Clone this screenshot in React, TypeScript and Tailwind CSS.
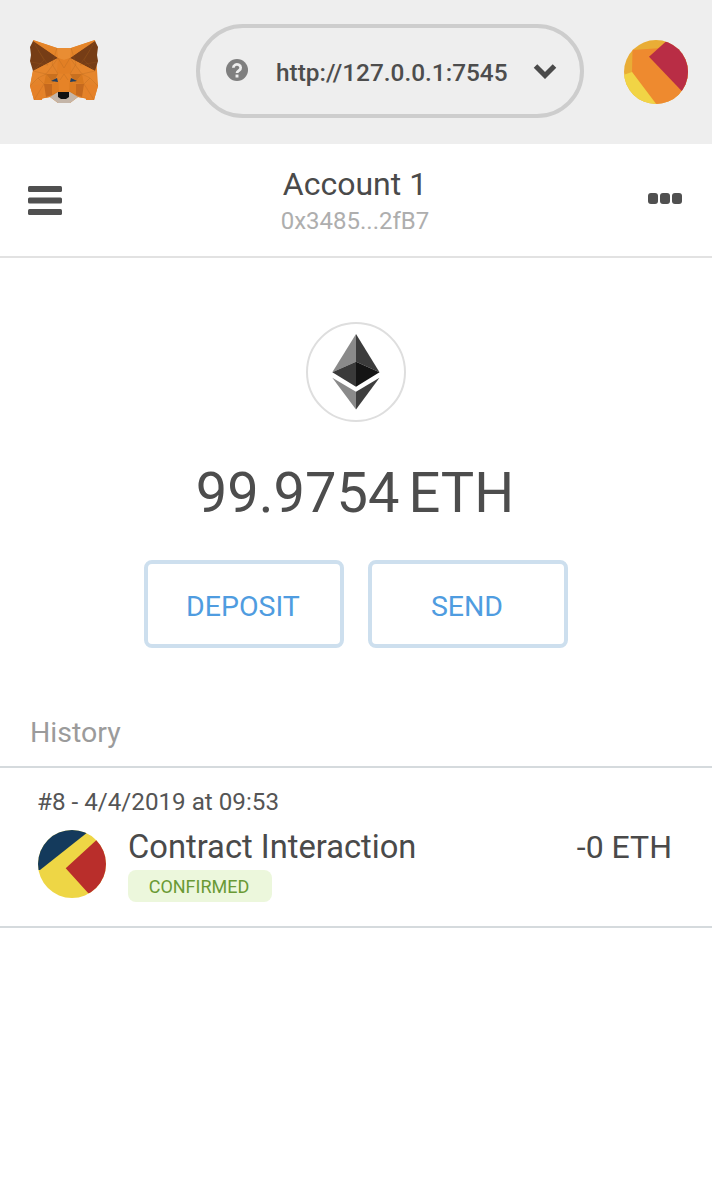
const half: [string, string][] = [
  ["33,41 30,47 31,55 30,61 33,71 58,58", "#763d16"],
  ["33,40 57,48 58,58", "#e58529"],
  ["57,48 64,48 64,60 58,58", "#e98d33"],
  ["58,58 64,60 64,74 57,73", "#e27f24"],
  ["33,71 58,58 46,74 30,86", "#e6862c"],
  ["46,74 58,74 53,83", "#c9701f"],
  ["46,74 53,83 44,84", "#d8791f"],
  ["30,86 44,84 42,100 34,100", "#e58128"],
  ["44,84 52,84 52,95 46,97", "#c5691e"],
  ["52,84 60,80 59,92 52,95", "#de7c21"],
  ["58,74 64,74 64,92 59,92", "#e68327"],
  ["34,100 46,97 50,97", "#df7a1e"],
];

const mirror = (points: string) =>
  points
    .split(" ")
    .map((p) => {
      const [x, y] = p.split(",").map(Number);
      return `${128 - x},${y}`;
    })
    .join(" ");

const veins = [
  "33,41 44,60 33,71",
  "38,50 48,65 31,62",
  "33,71 46,74 58,58",
  "30,86 38,78 46,74",
  "38,78 44,84 34,100",
  "57,48 52,64 58,74",
  "58,58 64,68",
  "60,80 64,74",
  "52,95 58,92",
];

function Fox() {
  return (
    <svg viewBox="28 38 72 68" className="w-[72px] h-[68px] shrink-0">
      <polygon
        points="33,40 57,48 71,48 95,40 97,70 98,86 94,100 78,97 70,103 58,103 50,97 34,100 30,86 33,70"
        fill="#e4832a"
      />
      {half.map(([points, fill], i) => (
        <g key={i}>
          <polygon points={points} fill={fill} />
          <polygon points={mirror(points)} fill={fill} />
        </g>
      ))}
      {veins.map((points, i) => (
        <g key={i} fill="none" stroke="#a5601f" strokeWidth="0.4" opacity="0.6">
          <polyline points={points} />
          <polyline points={mirror(points)} />
        </g>
      ))}
      <polygon points="50,97 58,92 70,92 78,97 70,103 58,103" fill="#c4b5a8" />
      <polygon points="58,92 69,92 69,97 66,99 61,99 58,97" fill="#111111" />
      <polygon points="51,81 57,78 58,82" fill="#233f60" />
      <polygon points="77,81 71,78 70,82" fill="#233f60" />
    </svg>
  );
}

function AccountIdenticon() {
  return (
    <svg viewBox="624 40 64 64" className="w-16 h-16 shrink-0">
      <clipPath id="acct">
        <circle cx="656" cy="72" r="32" />
      </clipPath>
      <g clipPath="url(#acct)">
        <rect x="624" y="40" width="64" height="64" fill="#e9ad36" />
        <polygon points="632.5,50 658,48.3 666,41.7 700,70 681.7,90.7 670,110 656,103.5 632,72" fill="#ee8a2f" />
        <polygon points="632,72 656,104 620,110 620,76" fill="#f1d445" />
        <polygon points="649,56.7 666,41.5 700,40 700,80 681.7,91" fill="#b92d45" />
      </g>
    </svg>
  );
}

function TxIdenticon() {
  return (
    <svg viewBox="38 830 68 68" className="w-[68px] h-[68px] shrink-0">
      <clipPath id="tx">
        <circle cx="72" cy="864" r="34" />
      </clipPath>
      <g clipPath="url(#tx)">
        <rect x="38" y="830" width="68" height="68" fill="#eed645" />
        <polygon points="38,830 90,830 86.7,833 40,870 38,870" fill="#143a5c" />
        <polygon points="65.7,868.3 95.7,840.7 110,827.5 110,900 88.3,893.3" fill="#b92e2b" />
      </g>
    </svg>
  );
}

function EthLogo() {
  return (
    <div className="w-[100px] h-[100px] rounded-full border-2 border-[#dedede] flex items-center justify-center">
      <svg viewBox="332 334 48 76" className="w-12 h-[76px]">
        <polygon points="356,334 332.3,372.3 356,361.7" fill="#8a8a8a" />
        <polygon points="356,334 379.5,372.3 356,361.7" fill="#3c3c3c" />
        <polygon points="356,361.7 332.3,372.3 356,386.7" fill="#3a3a3a" />
        <polygon points="356,361.7 379.5,372.3 356,386.7" fill="#141414" />
        <polygon points="332.3,377.7 356,391.7 356,409.5" fill="#8a8a8a" />
        <polygon points="379.5,377.7 356,391.7 356,409.5" fill="#3e3e3e" />
      </svg>
    </div>
  );
}

export default function App() {
  return (
    <div className="w-[712px] h-[1200px] bg-white text-[#4d4d4d] font-['Roboto',sans-serif] overflow-hidden">
      <header className="h-[144px] bg-[#eeeeee] flex items-center pl-7">
        <Fox />
        <div className="w-[388px] h-[94px] -mt-[2px] ml-[96px] rounded-full border-4 border-[#cdcdcd] flex items-center pl-[26px] pr-[23px]">
          <svg viewBox="0 0 24 24" className="w-[22px] h-[22px] shrink-0 -mt-[3px]">
            <circle cx="12" cy="12" r="12" fill="#7f7f7f" />
            <path d="M8 9.5a4 3.6 0 1 1 6.2 3c-1.4.9-2.2 1.3-2.2 2.7" fill="none" stroke="#eeeeee" strokeWidth="3" />
            <rect x="10.4" y="17" width="3.2" height="3.2" fill="#eeeeee" />
          </svg>
          <span className="ml-[28px] mt-[4px] text-[24.4px] font-medium text-[#4d4d4d] whitespace-nowrap">http://127.0.0.1:7545</span>
          <svg viewBox="0 0 24 16" className="w-[24px] h-[16px] ml-auto -mt-[1px] shrink-0">
            <path d="M2.5 3 12 12.5 21.5 3" fill="none" stroke="#4a4a4a" strokeWidth="5" />
          </svg>
        </div>
        <div className="ml-[40px]">
          <AccountIdenticon />
        </div>
      </header>

      <div className="h-[114px] border-b-2 border-[#e2e2e2] flex items-center justify-between pl-7 pr-[30px]">
        <svg viewBox="0 0 34 29" className="w-[34px] h-[29px] shrink-0">
          <rect y="0" width="34" height="6" rx="1.5" fill="#505050" />
          <rect y="11.5" width="34" height="6" rx="1.5" fill="#505050" />
          <rect y="23" width="34" height="6" rx="1.5" fill="#505050" />
        </svg>
        <div className="flex flex-col items-center -mt-[1px]">
          <div className="text-[32px] leading-[38px] text-[#4a4a4a]">Account 1</div>
          <div className="mt-1 text-[24px] leading-[28px] text-[#aeaeae]">0x3485...2fB7</div>
        </div>
        <svg viewBox="0 0 34 12" className="w-[34px] h-3 shrink-0 -mt-[3px]">
          <rect x="0" y="0" width="10" height="11" rx="3" fill="#505050" />
          <rect x="12" y="0" width="10" height="11" rx="3" fill="#505050" />
          <rect x="24" y="0" width="10" height="11" rx="3" fill="#505050" />
        </svg>
      </div>

      <section className="flex flex-col items-center pt-[64px]">
        <EthLogo />
        <div className="mt-[36px] pr-[2px] text-[56px] leading-[70px] text-[#4d4d4d] flex gap-[9px]">
          <span>99.9754</span>
          <span>ETH</span>
        </div>
        <div className="mt-[32px] flex gap-6">
          <div className="w-[200px] h-[88px] pt-[6px] pr-[2px] rounded-lg border-4 border-[#cddfee] flex items-center justify-center text-[28.5px] text-[#4f9ce0]">DEPOSIT</div>
          <div className="w-[200px] h-[88px] pt-[6px] pr-[2px] rounded-lg border-4 border-[#cddfee] flex items-center justify-center text-[28.5px] text-[#4f9ce0]">SEND</div>
        </div>
      </section>

      <div className="mt-[66px] h-[54px] pl-[30px] border-b-2 border-[#d5dadd] text-[28.5px] leading-[38px] text-[#9b9b9b]">History</div>

      <div className="h-[160px] border-b-2 border-[#d5dadd] pl-[38px] pr-[40px] pt-[18px]">
        <div className="-ml-[1px] text-[24.2px] leading-[32px] text-[#555555]">#8 - 4/4/2019 at 09:53</div>
        <div className="flex mt-[12px]">
          <TxIdenticon />
          <div className="ml-[22px] flex flex-col -mt-[2px]">
            <div className="text-[32.7px] leading-[38px] text-[#4a4a4a] whitespace-nowrap">Contract Interaction</div>
            <div className="mt-[4px] w-[144px] h-[32px] pr-[2px] rounded-lg bg-[#ecf7dc] flex items-center justify-center text-[18px] text-[#6a9a35]">CONFIRMED</div>
          </div>
          <div className="ml-auto -mt-[2px] text-[32px] leading-[38px] text-[#4a4a4a] whitespace-nowrap">-0 ETH</div>
        </div>
      </div>
    </div>
  );
}
